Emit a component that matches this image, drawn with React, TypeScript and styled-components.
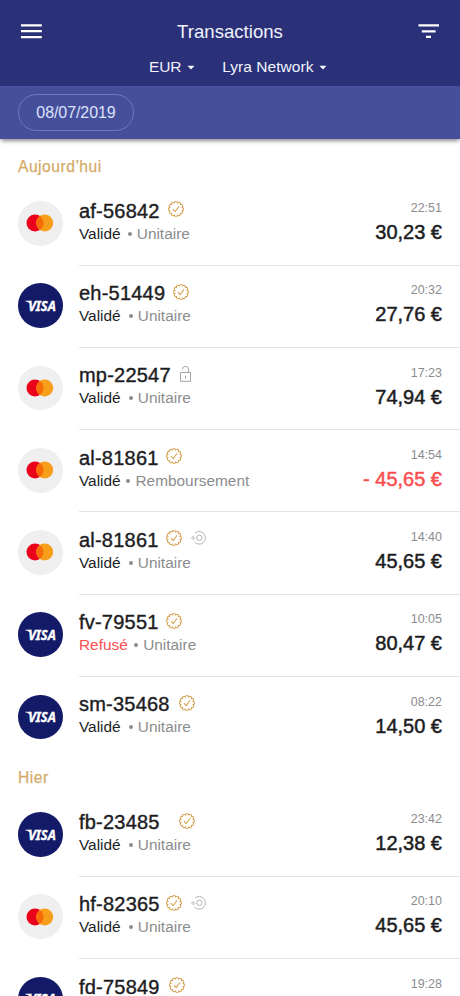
import React from 'react';
import styled, { createGlobalStyle } from 'styled-components';

const GlobalStyle = createGlobalStyle`
  * { box-sizing: border-box; }
  html, body { margin: 0; height: 100%; overflow: hidden; background: #fff; }
  body { font-family: "Liberation Sans", Arial, sans-serif; color: #1d1d1f; }
  svg { display: block; flex: none; overflow: visible; }
`;

const Screen = styled.div`
  height: 996px;
  overflow: hidden;
  background: #fff;
`;

const Header = styled.header`
  position: relative;
  height: 139px;
  box-shadow: 0 3px 4px -1px rgba(0, 0, 0, 0.45);
`;

const AppBar = styled.div`
  height: 86px;
  padding: 20px 20px 0;
  background: #2a3178;
  color: #f1f2fc;
`;

const TitleRow = styled.div`
  display: flex;
  align-items: center;
  justify-content: space-between;
  height: 23px;
`;

const Title = styled.h1`
  margin: 0;
  font-size: 18.6px;
  line-height: 23px;
  font-weight: 400;
`;

const IconButton = styled.button`
  padding: 0 0 2px;
  border: 0;
  background: none;
`;

const Selectors = styled.div`
  display: flex;
  gap: 27px;
  margin: 14px 0 0 129px;
`;

const Selector = styled.div<{ $tracking: number }>`
  display: flex;
  align-items: center;
  gap: 6px;
  height: 20px;
  font-size: 15.5px;
  line-height: 20px;
  letter-spacing: ${(p) => p.$tracking}px;
  white-space: nowrap;
`;

const FilterBar = styled.div`
  display: flex;
  align-items: center;
  height: 53px;
  padding: 0 18px;
  background: #464f9b;
`;

const DateChip = styled.div`
  width: 116px;
  height: 37px;
  border: 1px solid #6f78bc;
  border-radius: 19px;
  color: #dce1fa;
  font-size: 16px;
  line-height: 36px;
  letter-spacing: -0.08px;
  text-align: center;
`;

const Section = styled.section``;

const SectionTitle = styled.h2<{ $first?: boolean }>`
  height: ${(p) => (p.$first ? 44.4 : 35.3)}px;
  margin: 0;
  padding: ${(p) => (p.$first ? 18 : 8.6)}px 18px 0;
  color: #d4aa67;
  font-size: 15.6px;
  line-height: 20px;
  font-weight: 400;
  letter-spacing: 0.52px;
  -webkit-text-stroke: 0.25px #d4aa67;
`;

const Row = styled.article`
  display: flex;
  height: 82.25px;
  padding-left: 18px;
`;

const BrandDisc = styled.div<{ $visa: boolean }>`
  display: flex;
  align-items: center;
  justify-content: center;
  flex: none;
  width: 44.6px;
  height: 44.6px;
  margin: 17.8px 16.4px 0 0;
  border-radius: 50%;
  background: ${(p) => (p.$visa ? '#131b69' : '#efefef')};
`;

const RowBody = styled.div<{ $last?: boolean }>`
  display: flex;
  flex: 1;
  justify-content: space-between;
  padding-right: 18px;
  border-bottom: 1px solid ${(p) => (p.$last ? 'transparent' : '#e4e4e4')};
`;

const Info = styled.div`
  padding-top: 16.6px;
`;

const NameLine = styled.div`
  display: flex;
  height: 23px;
  gap: 9px;
`;

const Name = styled.span<{ $width: number }>`
  width: ${(p) => p.$width}px;
  font-size: 20px;
  line-height: 23px;
  letter-spacing: 0.22px;
  white-space: nowrap;
  -webkit-text-stroke: 0.4px #1d1d1f;
`;

const DetailLine = styled.div`
  display: flex;
  height: 20px;
  margin-top: 1px;
  font-size: 15.4px;
  line-height: 20px;
  white-space: nowrap;
`;

const Status = styled.span<{ $refused: boolean; $width: number }>`
  width: ${(p) => p.$width}px;
  color: ${(p) => (p.$refused ? '#fa4f50' : '#1d1d1f')};
`;

const Kind = styled.span`
  display: flex;
  align-items: center;
  gap: 5px;
  color: #8c8c8e;

  &::before {
    content: '';
    width: 4px;
    height: 4px;
    border-radius: 50%;
    background: #8c8c8e;
  }
`;

const Figures = styled.div`
  padding-top: 16.8px;
  text-align: right;
  white-space: nowrap;
`;

const Time = styled.div`
  height: 16px;
  color: #8c8c8e;
  font-size: 12.5px;
  line-height: 16px;
`;

const Amount = styled.div<{ $negative: boolean }>`
  margin-top: 4px;
  color: ${(p) => (p.$negative ? '#fa4f50' : '#1d1d1f')};
  font-size: 20px;
  line-height: 24px;
  -webkit-text-stroke: 0.5px currentColor;
`;

const BadgeSlot = styled.span`
  padding-top: 1.5px;
`;

const MenuIcon = () => (
  <svg width="22" height="16" viewBox="0 0 22 16" stroke="#fff" strokeWidth="2.2">
    <path d="M1 2.3h20.8M1 8.2h20.8M1 14.1h20.8" />
  </svg>
);

const FilterIcon = () => (
  <svg width="22" height="16" viewBox="0 0 22 16" stroke="#fff" strokeWidth="2.3">
    <path d="M.5 2.3h20.5M3.8 8.3h13.8M8 13.8h5" />
  </svg>
);

const Caret = () => (
  <svg width="8" height="5" viewBox="0 0 8 5" fill="#fff">
    <path d="M.5.8h7L4 4.6z" />
  </svg>
);

const scallops = (() => {
  const pts = Array.from({ length: 12 }, (_, i) => {
    const a = ((i * 30 - 75) * Math.PI) / 180;
    return `${(8 + 6.4 * Math.cos(a)).toFixed(2)} ${(8 + 6.4 * Math.sin(a)).toFixed(2)}`;
  });
  return `M${pts[0]}` + [...pts.slice(1), pts[0]].map((p) => `A1.7 1.7 0 0 1 ${p}`).join('') + 'Z';
})();

const Check = () => (
  <svg width="16" height="16" viewBox="0 0 16 16" fill="none" stroke="#d5a458" strokeWidth="1.1">
    <path d={scallops} />
    <path d="M4.9 8.1l2.3 2.5 3.9-5.4" />
  </svg>
);

const Lock = () => (
  <svg width="13" height="17" viewBox="0 0 13 17" fill="none" stroke="#a4a4a6" strokeWidth="1">
    <path d="M1.5 6.5h10v8.8h-10zM3.5 3.8V3.3a3 3 0 0 1 6 0V6.5M6.5 9.7v2.8" />
  </svg>
);

const Refund = () => (
  <svg width="16" height="16" viewBox="0 0 16 16" fill="none" stroke="#b4b4b6" strokeWidth="1">
    <path d="M4.1 3A6.3 6.3 0 1 1 3.6 12.2M2 7.6A6.3 6.3 0 0 0 2.5 10.2" />
    <path d="M0 8.6l2-2.1 2.1 2.1" />
    <circle cx="8.4" cy="7.8" r="2.7" />
  </svg>
);

const Mastercard = () => (
  <svg width="28" height="18" viewBox="0 0 28 18">
    <circle cx="9" cy="9" r="8.5" fill="#eb001b" />
    <circle cx="18.7" cy="9" r="8.5" fill="#f79e1b" />
    <path d="M13.85 2.02a8.5 8.5 0 0 1 0 13.96a8.5 8.5 0 0 1 0-13.96z" fill="#f96b08" />
  </svg>
);

const Visa = () => (
  <svg width="40" height="24" viewBox="-3 -4 40 24" fill="#fff">
    <path d="M2.2 2.7h5.2l1.2 4.6C7.3 5 4.8 3.8 2.2 3.2z" />
    <text
      x="5.2"
      y="13.1"
      fontFamily="Noto Sans, sans-serif"
      fontSize="14.6"
      fontWeight="700"
      fontStyle="italic"
      textLength="27.6"
      lengthAdjust="spacingAndGlyphs"
      stroke="#fff"
      strokeWidth="0.4"
    >
      VISA
    </text>
  </svg>
);

type Tx = {
  id: string;
  visa?: boolean;
  nameWidth: number;
  badges: ('check' | 'lock' | 'refund')[];
  status?: string;
  statusWidth?: number;
  kind?: string;
  time: string;
  amount?: string;
};

const today: Tx[] = [
  { id: 'af-56842', nameWidth: 80.5, badges: ['check'], status: 'Validé', statusWidth: 48.8, time: '22:51', amount: '30,23 €' },
  { id: 'eh-51449', visa: true, nameWidth: 85, badges: ['check'], status: 'Validé', time: '20:32', amount: '27,76 €' },
  { id: 'mp-22547', nameWidth: 91, badges: ['lock'], status: 'Validé', time: '17:23', amount: '74,94 €' },
  { id: 'al-81861', nameWidth: 78.3, badges: ['check'], status: 'Validé', statusWidth: 47.5, kind: 'Remboursement', time: '14:54', amount: '- 45,65 €' },
  { id: 'al-81861', nameWidth: 78.3, badges: ['check', 'refund'], status: 'Validé', time: '14:40', amount: '45,65 €' },
  { id: 'fv-79551', visa: true, nameWidth: 78.3, badges: ['check'], status: 'Refusé', statusWidth: 55.2, time: '10:05', amount: '80,47 €' },
  { id: 'sm-35468', visa: true, nameWidth: 91.5, badges: ['check'], status: 'Validé', time: '08:22', amount: '14,50 €' },
];

const yesterday: Tx[] = [
  { id: 'fb-23485', visa: true, nameWidth: 91.5, badges: ['check'], status: 'Validé', time: '23:42', amount: '12,38 €' },
  { id: 'hf-82365', nameWidth: 78.3, badges: ['check', 'refund'], status: 'Validé', time: '20:10', amount: '45,65 €' },
  { id: 'fd-75849', visa: true, nameWidth: 81.5, badges: ['check'], time: '19:28' },
];

const badgeIcons = { check: Check, lock: Lock, refund: Refund };

const Transaction = ({ tx, last }: { tx: Tx; last?: boolean }) => (
  <Row>
    <BrandDisc $visa={!!tx.visa}>{tx.visa ? <Visa /> : <Mastercard />}</BrandDisc>
    <RowBody $last={last}>
      <Info>
        <NameLine>
          <Name $width={tx.nameWidth}>{tx.id}</Name>
          {tx.badges.map((b) => {
            const Icon = badgeIcons[b];
            return (
              <BadgeSlot key={b}>
                <Icon />
              </BadgeSlot>
            );
          })}
        </NameLine>
        {tx.status && (
          <DetailLine>
            <Status $refused={tx.status === 'Refusé'} $width={tx.statusWidth ?? 49.8}>
              {tx.status}
            </Status>
            <Kind>{tx.kind ?? 'Unitaire'}</Kind>
          </DetailLine>
        )}
      </Info>
      <Figures>
        <Time>{tx.time}</Time>
        {tx.amount && <Amount $negative={tx.amount.startsWith('-')}>{tx.amount}</Amount>}
      </Figures>
    </RowBody>
  </Row>
);

export default function App() {
  return (
    <Screen>
      <GlobalStyle />
      <Header>
        <AppBar>
          <TitleRow>
            <IconButton aria-label="Menu">
              <MenuIcon />
            </IconButton>
            <Title>Transactions</Title>
            <IconButton aria-label="Filtrer">
              <FilterIcon />
            </IconButton>
          </TitleRow>
          <Selectors>
            <Selector $tracking={-0.2}>
              EUR <Caret />
            </Selector>
            <Selector $tracking={0.05}>
              Lyra Network <Caret />
            </Selector>
          </Selectors>
        </AppBar>
        <FilterBar>
          <DateChip>08/07/2019</DateChip>
        </FilterBar>
      </Header>
      <Section>
        <SectionTitle $first>Aujourd’hui</SectionTitle>
        {today.map((tx, i) => (
          <Transaction key={i} tx={tx} last={i === today.length - 1} />
        ))}
      </Section>
      <Section>
        <SectionTitle>Hier</SectionTitle>
        {yesterday.map((tx) => (
          <Transaction key={tx.id} tx={tx} />
        ))}
      </Section>
    </Screen>
  );
}
